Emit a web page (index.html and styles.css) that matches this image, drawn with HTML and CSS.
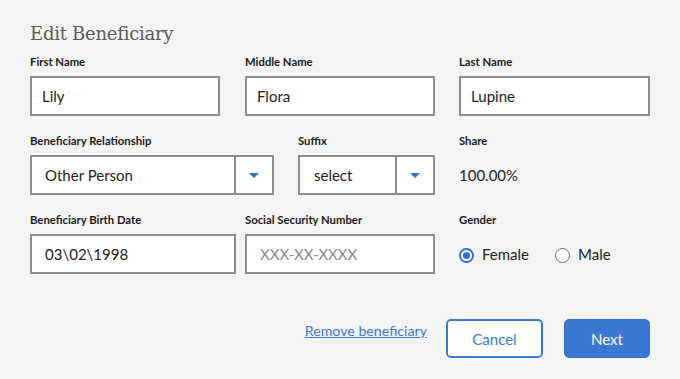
FILE: index.html
```html
<!DOCTYPE html>
<html>
<head>
<meta charset="utf-8">
<link rel="stylesheet" href="styles.css">
</head>
<body>
<div class="page">
  <h1 class="title">Edit Beneficiary</h1>
  <div class="row">
    <div class="field w190">
      <div class="label">First Name</div>
      <div class="input first">Lily</div>
    </div>
    <div class="field w190 shift">
      <div class="label">Middle Name</div>
      <div class="input first">Flora</div>
    </div>
    <div class="field w191">
      <div class="label">Last Name</div>
      <div class="input first">Lupine</div>
    </div>
  </div>
  <div class="row">
    <div class="field w244">
      <div class="label">Beneficiary Relationship</div>
      <div class="select">
        <span class="select-value">Other Person</span>
        <span class="select-btn"><span class="tri"></span></span>
      </div>
    </div>
    <div class="field w137">
      <div class="label">Suffix</div>
      <div class="select">
        <span class="select-value suf">select</span>
        <span class="select-btn"><span class="tri"></span></span>
      </div>
    </div>
    <div class="field w191">
      <div class="label">Share</div>
      <div class="share">100.00%</div>
    </div>
  </div>
  <div class="row">
    <div class="field w206">
      <div class="label">Beneficiary Birth Date</div>
      <div class="input">03\02\1998</div>
    </div>
    <div class="field w190 ssn">
      <div class="label">Social Security Number</div>
      <div class="input placeholder">XXX-XX-XXXX</div>
    </div>
    <div class="field w191">
      <div class="label">Gender</div>
      <div class="radios">
        <span class="radio checked"><span class="dot"></span></span><span class="radio-label">Female</span>
        <span class="radio"></span><span class="radio-label">Male</span>
      </div>
    </div>
  </div>
  <div class="actions">
    <a class="link" href="#">Remove beneficiary</a>
    <button class="btn cancel">Cancel</button>
    <button class="btn next">Next</button>
  </div>
</div>
</body>
</html>
```
FILE: styles.css
```css
* { box-sizing: border-box; }
html, body { margin: 0; padding: 0; }
body {
  background: #f4f4f4;
  font-family: Lato, "Noto Sans", sans-serif;
  color: #222;
  width: 680px;
  height: 379px;
  overflow: hidden;
}
.page { padding: 20px 30px 0 30px; }
.title {
  margin: 0;
  font-family: "DejaVu Serif", serif;
  font-weight: normal;
  font-size: 18px;
  line-height: 28px;
  color: #5a5a5a;
  letter-spacing: -0.25px;
}
.row {
  display: flex;
  gap: 24px;
  height: 79px;
}
.title + .row { margin-top: 7px; }
.w190 { width: 190px; }
.w191 { width: 191px; }
.w244 { width: 244px; }
.w137 { width: 137px; }
.w206 { width: 206px; }
.shift { margin-left: 1px; }
.ssn { margin-left: -15px; }
.label {
  font-size: 11.3px;
  font-weight: bold;
  line-height: 14px;
  color: #1a1a1a;
  margin-bottom: 7px;
}
.input {
  height: 40px;
  border: 2px solid #8c8c8c;
  background: #fff;
  font-size: 15px;
  line-height: 36px;
  padding-left: 13px;
  color: #222;
}
.input.first { padding-left: 10px; }
.input.placeholder { color: #8a8a8a; }
.select {
  display: flex;
  height: 40px;
  border: 2px solid #8c8c8c;
  background: #fff;
}
.select-value {
  flex: 1;
  font-size: 15px;
  line-height: 36px;
  padding-left: 13px;
  color: #222;
}
.select-value.suf { padding-left: 14px; }
.select-btn {
  width: 38px;
  border-left: 2px solid #8c8c8c;
  display: flex;
  align-items: center;
  justify-content: center;
}
.tri {
  width: 0; height: 0;
  border-left: 5px solid transparent;
  border-right: 5px solid transparent;
  border-top: 5px solid #2f6fd6;
  margin-top: 1px;
}
.share {
  font-size: 15px;
  line-height: 20px;
  margin-top: 17px;
  color: #222;
}
.radios {
  display: flex;
  align-items: center;
  height: 40px;
}
.radio {
  width: 15px;
  height: 15px;
  border-radius: 50%;
  border: 1.5px solid #6b6b6b;
  background: #fff;
  display: inline-flex;
  align-items: center;
  justify-content: center;
  margin-top: 2px;
}
.radio.checked { border: 2px solid #2f6fd6; }
.dot { width: 7px; height: 7px; border-radius: 50%; background: #2f6fd6; }
.radio-label { font-size: 15px; margin-left: 8px; margin-right: 26px; }
.actions {
  display: flex;
  justify-content: flex-end;
  align-items: center;
  margin-top: 27px;
}
.link {
  color: #3b78d4;
  font-size: 14.2px;
  text-decoration: underline;
  margin-right: 19px;
  margin-top: -16px;
}
.btn {
  font-family: Lato, "Noto Sans", sans-serif;
  font-size: 15px;
  height: 39px;
  border-radius: 5px;
  cursor: pointer;
}
.cancel {
  width: 97px;
  background: #fff;
  border: 2px solid #3b78d4;
  color: #3b78d4;
  margin-right: 21px;
}
.next {
  width: 86px;
  background: #3b78d4;
  border: 1px solid #3470cc;
  color: #fff;
}
```
